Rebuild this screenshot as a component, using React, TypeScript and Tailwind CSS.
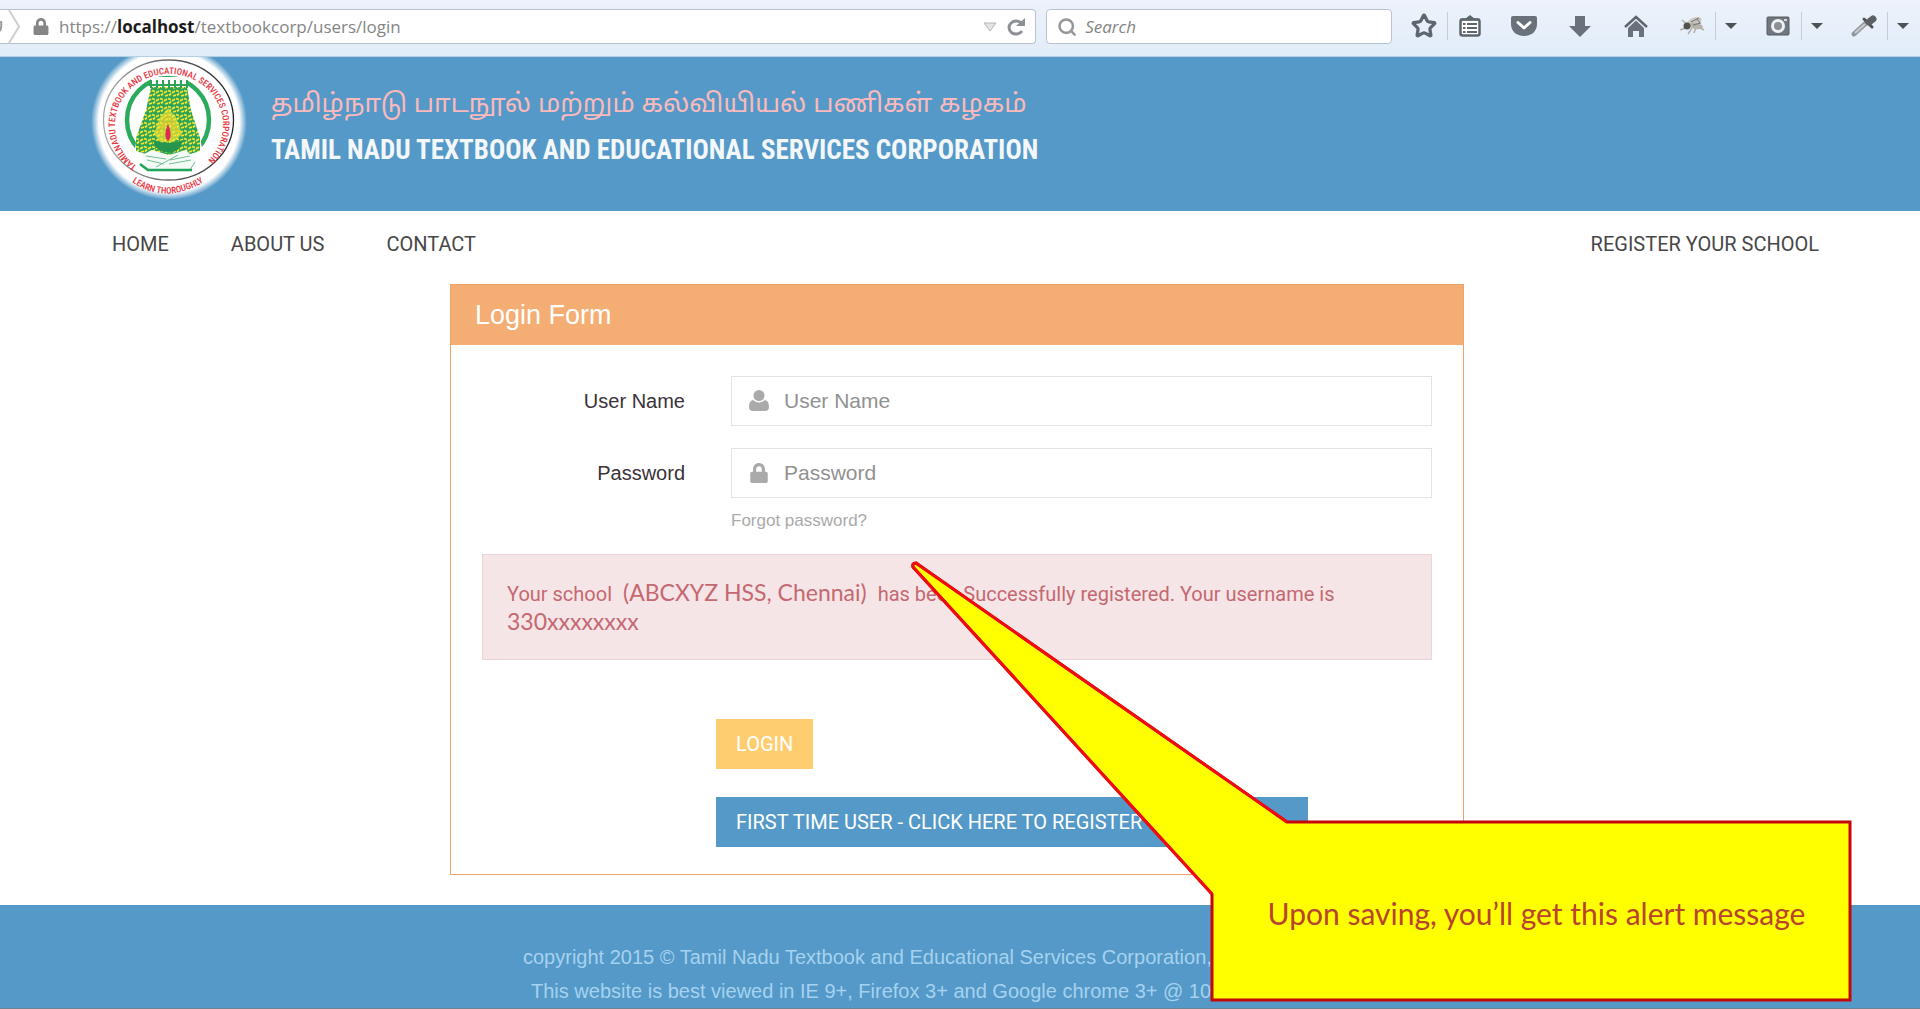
import type { ReactNode } from "react"
import { Search, Star } from "lucide-react"
import { FaLock } from "react-icons/fa"

const navLinks = ["HOME", "ABOUT US", "CONTACT"]

function ToolButton({ label, className = "", children }: { label: string; className?: string; children: ReactNode }) {
  return (
    <button type="button" aria-label={label} className={`flex h-7 shrink-0 items-center justify-center ${className}`}>
      {children}
    </button>
  )
}

function CaretButton({ label }: { label: string }) {
  return (
    <ToolButton label={label} className="w-[30px]">
      <svg width="12" height="8" viewBox="0 0 12 8" fill="#4d5257">
        <path d="M0 1h12L6 7z" />
      </svg>
    </ToolButton>
  )
}

function BrowserToolbar() {
  return (
    <div className="flex h-[57px] items-start border-b border-[#b5cfe3] bg-gradient-to-b from-[#edf2fb] to-[#e1edf9] pt-[9px] pr-0.5 font-['Open_Sans',sans-serif]">
      <div className="flex h-[35px] min-w-0 flex-1 items-center rounded-r-sm border border-l-0 border-[#b9c2d0] bg-white pr-2.5">
        <svg width="33" height="33" viewBox="0 0 33 33" fill="none" className="shrink-0">
          <path d="M0 21q2-4 1-10" stroke="#9a9a9a" strokeWidth="2" />
          <path d="M9 0l10 16.500L9 33" stroke="#cfcfcf" strokeWidth="2" />
        </svg>
        <FaLock className="mr-2.5 h-[17px] w-4 shrink-0 text-[#858585]" />
        <div className="flex-1 truncate text-[17px] leading-8 text-[#858585]">
          https://<b className="font-bold text-[#1c1c1c]">localhost</b>/textbookcorp/users/login
        </div>
        <svg width="42" height="18" viewBox="0 0 42 18" fill="none" className="shrink-0">
          <path d="M1 5h12l-6 8z" fill="#e4e4e4" stroke="#b5b5b5" />
          <path d="M38.500 5.500A7 6.500 0 1 0 39 13" stroke="#8d9195" strokeWidth="3" />
          <path d="M33 8h9V0z" fill="#8d9195" />
        </svg>
      </div>
      <label className="ml-2.5 flex h-[35px] w-[346px] shrink-0 items-center gap-2 rounded-sm border border-[#b9c2d0] bg-white pl-2.5">
        <Search className="size-[22px] text-[#979797]" strokeWidth={3} />
        <input
          aria-label="Search"
          placeholder="Search"
          className="w-full text-[17px] italic outline-none placeholder:text-[#858585]"
        />
      </label>
      <div className="mt-[3px] ml-2 flex shrink-0 items-center">
        <ToolButton label="Bookmark" className="w-12 border-r border-[#c5cdd6]">
          <Star className="size-[26px] text-[#5d666f]" strokeWidth={3} strokeLinejoin="miter" />
        </ToolButton>
        <ToolButton label="Library" className="w-11">
          <svg width="22" height="22" viewBox="0 0 22 22" fill="none" stroke="#5d666f" strokeWidth="2.500">
            <rect x="1.500" y="4.500" width="19" height="16" rx="2" fill="#fff" />
            <path d="M6 4l5-4 5 4z" fill="#5d666f" stroke="none" />
            <path d="M1.500 4.500h19M4 9h2.500M8 9h10M4 13h2.500M8 13h10M4 17h2.500M8 17h10" strokeWidth="2" />
          </svg>
        </ToolButton>
        <ToolButton label="Pocket" className="ml-2 w-12">
          <svg width="26" height="22" viewBox="0 0 26 22" fill="none">
            <path d="M2 1h22q2 0 2 2v6c0 7-5 12-13 12S0 16 0 9V3q0-2 2-2z" fill="#69727b" />
            <path d="M7 7.500l6 5.500 6-5.500" stroke="#fff" strokeWidth="3" strokeLinecap="round" strokeLinejoin="round" />
          </svg>
        </ToolButton>
        <ToolButton label="Downloads" className="ml-2 w-12">
          <svg width="22" height="22" viewBox="0 0 22 22" fill="#69727b">
            <path d="M6 1h10v10h6L11 22 0 11h6z" />
          </svg>
        </ToolButton>
        <ToolButton label="Home" className="ml-2 w-12">
          <svg width="24" height="22" viewBox="0 0 24 22" fill="#69727b">
            <path d="M1 12L12 2l11 10" fill="none" stroke="#5d666f" strokeWidth="2.500" />
            <path d="M4 13l8-7.500L20 13v9h-5v-6H9v6H4z" />
          </svg>
        </ToolButton>
        <ToolButton label="Firebug" className="ml-2 w-12 border-r border-[#c5cdd6]">
          <svg width="26" height="20" viewBox="0 0 26 20" fill="none">
            <path d="M3 4l6 5M1 14l8-3M9 18l4-6M15 17l2-6M25 14l-7-4" stroke="#b3b0ab" strokeWidth="1.500" />
            <ellipse cx="15" cy="6" rx="8" ry="4" transform="rotate(-25 15 6)" fill="#c9c6c1" />
            <ellipse cx="17" cy="10" rx="7" ry="3" transform="rotate(10 17 10)" fill="#b5b1ab" />
            <circle cx="8" cy="10" r="3.500" fill="#55524e" />
            <path d="M12 6l8-4M14 9l8-2M18 3l3 4" stroke="#77736e" />
          </svg>
        </ToolButton>
        <CaretButton label="Firebug options" />
        <ToolButton label="Screenshot" className="ml-2 w-12 border-r border-[#c5cdd6]">
          <svg width="24" height="20" viewBox="0 0 24 20" fill="none">
            <rect x="1" y="1" width="22" height="18" rx="1" fill="#70777f" stroke="#555c63" />
            <circle cx="12" cy="10" r="5.500" fill="#8a9096" stroke="#eef1f4" strokeWidth="3" />
            <path d="M18 4h3" stroke="#d5dade" strokeWidth="2" />
          </svg>
        </ToolButton>
        <CaretButton label="Screenshot options" />
        <ToolButton label="Color picker" className="ml-2 w-12 border-r border-[#c5cdd6]">
          <svg width="26" height="22" viewBox="0 0 26 22" fill="none">
            <path d="M3 19L15 8" stroke="#92979c" strokeWidth="5" strokeLinecap="round" />
            <path d="M4 18L14 9" stroke="#c9cdd1" strokeWidth="2" />
            <path d="M13 4l8 8" stroke="#4c5054" strokeWidth="3" strokeLinecap="round" />
            <path d="M18 7l4-3" stroke="#5b6065" strokeWidth="7" strokeLinecap="round" />
          </svg>
        </ToolButton>
        <CaretButton label="Color picker options" />
      </div>
    </div>
  )
}

function Emblem() {
  return (
    <svg width="180" height="154" viewBox="0 0 180 154" fill="none" className="shrink-0" role="img" aria-label="Emblem">
      <defs>
        <radialGradient id="glow">
          <stop offset="0.900" stopColor="#fff" />
          <stop offset="1" stopColor="#fff" stopOpacity="0" />
        </radialGradient>
        <linearGradient id="ring">
          <stop offset="0" stopColor="#aaa" />
          <stop offset="1" stopColor="#222" />
        </linearGradient>
        <pattern id="carving" width="8" height="8" patternUnits="userSpaceOnUse">
          <rect width="8" height="8" fill="#2fa355" />
          <path d="M0 1.500l3 1M4 4l3-2M1 6.500l2-2M5 7l3-1" stroke="#f1e635" strokeWidth="1.800" />
        </pattern>
        <path id="ringText" d="M57 109A54 51 0 1 1 121 109" />
        <path id="mottoText" d="M52 125Q88 150 130 121" />
      </defs>
      <circle cx="89" cy="65" r="78" fill="url(#glow)" />
      <ellipse cx="88.500" cy="63" rx="65" ry="60" stroke="url(#ring)" strokeWidth="1.300" />
      <ellipse cx="88" cy="63" rx="41" ry="42" stroke="#2cab5e" strokeWidth="4.500" />
      <path d="M71 20h36v10H71z" fill="#fff" />
      <path d="M70 31h38l3 22 9 28 4 20H53l4-20 9-28z" fill="#fff" />
      <path d="M71 30h36l4 23 9 28v13l-16 5H72l-16-5V81l10-28z" fill="url(#carving)" />
      <path d="M69 28h39M71 23v8M77 23v8M83 23v8M89 23v8M95 23v8M101 23v8M107 23v8" stroke="#2fa355" strokeWidth="2" />
      <path d="M80 60l8-9 8 9 6 17-8 8H80l-6-8z" fill="#f1e635" opacity=".7" />
      <path d="M82 66q6-14 12 0M78 76q10-22 20 0" stroke="#d5b72a" />
      <path d="M73 83q15 6 30 0-3 11-10 12h-9q-9-2-11-12z" fill="#26964f" />
      <path d="M88 67c4 9 3 15 0 17-3-2-4-8 0-17z" fill="#e02a4e" />
      <path d="M62 98l10-5 17 5 17-5 10 10-6 12H67z" fill="#f4fbf7" />
      <path d="M61 109l6 4h43l5-8M66 99l20 3M67 103l17 4M90 103l20-4M89 107l22-4M76 110l22-12" stroke="#75bd95" />
      <path d="M60 107l8 6h44" stroke="#23a45a" strokeWidth="2.500" />
      <g fill="#e8343f" fontFamily="'Roboto Condensed', Roboto, sans-serif" fontSize="9" fontWeight="500">
        <text>
          <textPath href="#ringText">TAMILNADU TEXTBOOK AND EDUCATIONAL SERVICES CORPORATION</textPath>
        </text>
        <text>
          <textPath href="#mottoText">LEARN THOROUGHLY</textPath>
        </text>
      </g>
    </svg>
  )
}

function SiteHeader() {
  return (
    <header className="flex h-[154px] overflow-hidden bg-[#5499c7] px-20">
      <Emblem />
      <div className="ml-[11px] flex flex-col pt-[26px] whitespace-nowrap">
        <p lang="ta" className="font-['Noto_Sans_Tamil','Noto_Sans',sans-serif] text-[26px] leading-[46px] text-[#fbb9bb]">
          தமிழ்நாடு பாடநூல் மற்றும் கல்வியியல் பணிகள் கழகம்
        </p>
        <h1 className="font-['Roboto_Condensed','Roboto',sans-serif] text-[27px] leading-[42px] font-bold text-[#f4f7fa]">
          TAMIL NADU TEXTBOOK AND EDUCATIONAL SERVICES CORPORATION
        </h1>
      </div>
    </header>
  )
}

function Callout() {
  return (
    <div className="absolute top-1 left-[426px] z-10 h-[446px] w-[944px]">
      <svg viewBox="0 0 944 446" className="absolute inset-0 size-full">
        <path d="M378 263H941V441H303V335L4 8Q3 4 7 4Z" fill="#ff0" stroke="#c5070c" strokeWidth="3" />
        <path d="M303 335L4 8Q3 4 7 4L378 263" fill="none" stroke="#f00c0c" strokeWidth="3" />
      </svg>
      <p className="relative flex size-full items-center justify-center pt-[263px] pl-[311px] font-['Lato',sans-serif] text-[30px] whitespace-nowrap text-[#b8432f]">
        Upon saving, you’ll get this alert message
      </p>
    </div>
  )
}

function Field({ id, label, type, icon }: { id: string; label: string; type: string; icon: ReactNode }) {
  return (
    <div className="grid grid-cols-[203px_1fr] items-center gap-[46px]">
      <label htmlFor={id} className="text-right text-[20px] text-[#3a3238]">
        {label}
      </label>
      <div className="flex h-[50px] items-center gap-3.5 border border-[#e3e3e3] px-4">
        {icon}
        <input
          id={id}
          type={type}
          placeholder={label}
          className="w-full min-w-0 text-[21px] outline-none placeholder:text-[#919191]"
        />
      </div>
    </div>
  )
}

function LoginForm() {
  return (
    <form className="mx-auto max-w-[1014px] border border-[#f0a368] bg-white font-['Liberation_Sans',sans-serif]">
      <h2 className="bg-[#f4ad72] px-6 text-[27px] leading-[60px] text-white">Login Form</h2>
      <div className="flex flex-col px-[31px] pt-[31px] pb-[27px]">
        <div className="flex flex-col gap-[22px]">
          <Field
            id="username"
            label="User Name"
            type="text"
            icon={
              <svg width="22" height="22" viewBox="0 0 22 22" fill="#aaa" className="shrink-0">
                <ellipse cx="11" cy="5.500" rx="5.500" ry="5.500" />
                <path d="M5 10q6 5 12 0 4 1 4 7 0 4-4 4H5q-4 0-4-4 0-6 4-7z" />
              </svg>
            }
          />
          <Field
            id="password"
            label="Password"
            type="password"
            icon={<FaLock className="mx-0.5 h-5 w-[18px] shrink-0 text-[#aaa]" />}
          />
        </div>
        <a href="#" className="mt-[11px] ml-[249px] self-start text-[17px] leading-6 text-[#aaa]">
          Forgot password?
        </a>
        <div
          role="alert"
          className="relative mt-[21px] h-[106px] border border-[#ecd3d7] bg-[#f5e5e6] px-6 pt-[25px] font-['Roboto',sans-serif] text-[20px] leading-[29px] text-[#c46871]"
        >
          <p>
            Your school <span className="mx-1.5 font-['Lato',sans-serif] text-[23px] leading-none">(ABCXYZ HSS, Chennai)</span>{" "}
            has been Successfully registered. Your username is{" "}
            <span className="font-['Lato',sans-serif] text-[23px] leading-none">330xxxxxxxx</span>
          </p>
          <Callout />
        </div>
        <div className="mt-[59px] ml-[234px] flex flex-col items-start gap-7 font-['Roboto',sans-serif] text-[20px] leading-[50px] text-white">
          <button type="submit" className="bg-[#fecd6f] px-5">
            LOGIN
          </button>
          <a href="#" className="bg-[#5499c7] pr-7 pl-5">
            FIRST TIME USER - CLICK HERE TO REGISTER YOUR SCHOOL
          </a>
        </div>
      </div>
    </form>
  )
}

export default function App() {
  return (
    <div className="overflow-x-hidden bg-white">
      <BrowserToolbar />
      <SiteHeader />
      <nav className="flex h-[73px] items-center px-28 pb-2 font-['Roboto',sans-serif] text-[20px] text-[#474747]">
        <ul className="flex gap-[62px]">
          {navLinks.map((link) => (
            <li key={link}>
              <a href="#">{link}</a>
            </li>
          ))}
        </ul>
        <a href="#" className="mr-[-11px] ml-auto">
          REGISTER YOUR SCHOOL
        </a>
      </nav>
      <main className="pr-1.5 pb-[30px]">
        <LoginForm />
      </main>
      <footer className="border-b-2 border-[#6b8494] bg-[#5499c7] pr-1.5 font-['Liberation_Sans',sans-serif] text-[20px] leading-[34px] text-[#a6d2f0]">
        <div className="mx-auto max-w-[868px] pt-[35px]">
          <p>copyright 2015 © Tamil Nadu Textbook and Educational Services Corporation,</p>
          <p className="ml-2">This website is best viewed in IE 9+, Firefox 3+ and Google chrome 3+ @ 1024</p>
        </div>
      </footer>
    </div>
  )
}
